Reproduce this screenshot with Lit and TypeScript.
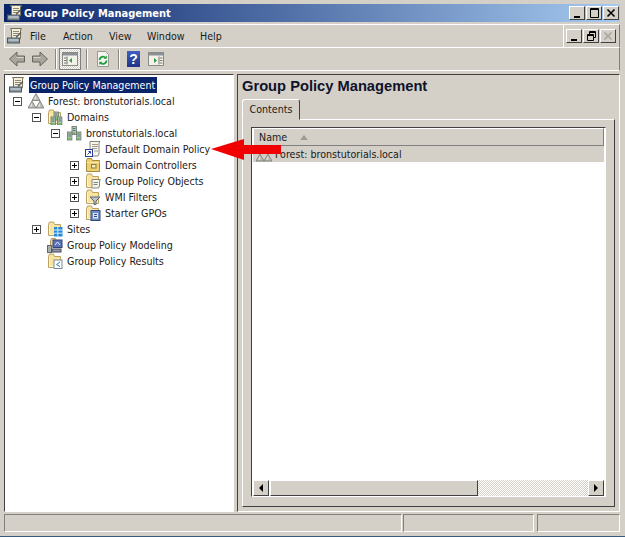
import { LitElement, html, css, svg } from "lit";
import { customElement } from "lit/decorators.js";

const i16 = (c: unknown, w = 16, h = 16) =>
  html`<svg class="ic" width=${w} height=${h} viewBox="0 0 16 16">${c}</svg>`;

const scroll = svg`<path d="M4 .5h10.5l-1 1.5v8l-1 2H3.5l1-2V2l-1-1.5z" fill="#f4efd8" stroke="#77705a"/>
<path d="M6 3.5h6M6 5.5h6M6 7.5h5" stroke="#8f8a78"/>`;
const rootIcon = i16(svg`${scroll}<rect x=".5" y="10" width="12" height="5" fill="#8b97a0" stroke="#4c5660"/>
<path d="M1.5 12h10" stroke="#d8e0e4"/><path d="M9 9.5l5-5" stroke="#555" stroke-width="1.2"/>`);
const tri = (x: number, y: number) => svg`<path d="M${x} ${y}l4 7h-8z" fill="#bdbdb8" stroke="#77776f" stroke-width=".8"/><path d="M${x} ${y + 2}l-2 3.6h2z" fill="#e8e8e2"/>`;
const forest = i16(svg`${tri(8, .5)}${tri(4, 8)}${tri(12, 8)}`);
const tower = (x: number, y: number) => svg`<rect x=${x} y=${y} width="4.4" height="8" fill="#b4c1b4" stroke="#66746e" stroke-width=".8"/>
<path d="M${x + 1} ${y + 2}h2.4M${x + 1} ${y + 4}h2.4" stroke="#4d7d6a"/><rect x=${x + 1} y=${y + 6} width="2.4" height="1.4" fill="#5ec23c"/>`;
const servers = svg`${tower(6, 1.5)}${tower(1.5, 7)}${tower(10.5, 7)}`;
const folder = svg`<path d="M1.5 3.5l1-2.5h4l1 2.5h6v11h-12z" fill="#f9e3a0" stroke="#b9a263"/>
<path d="M2.5 4.5v9h10" fill="none" stroke="#fff6d2"/>`;
const domains = i16(svg`${folder}${tower(7, 3)}${tower(4, 8)}${tower(10.5, 8)}`);
const domain = i16(servers);
const policy = i16(svg`<path d="M5 .5h10l-1 1.5v11l-1 2H4.5l.5-2z" fill="#f6f5ee" stroke="#8a8676"/>
<path d="M7 3.5h6M7 5.5h6M7 7.5h5M9 10h4" stroke="#a09c8c"/>
<rect x=".5" y="8.5" width="7" height="7" fill="#fff" stroke="#2b3f9a"/><path d="M2.5 13.5l3-3m-2 0h2v2" fill="none" stroke="#2b3f9a"/>`);
const ou = i16(svg`<path d="M1.5 3.5l1-2h4l1 2h7v11h-13z" fill="#eccf70" stroke="#a38a3a"/>
<path d="M1.5 5.5h13" stroke="#f8e6a2"/><rect x="6" y="7" width="5.5" height="4.5" fill="#8f7a3a"/><rect x="7" y="8" width="3.5" height="2.5" fill="#f5e9b8"/>`);
const gpo = i16(svg`${folder}<path d="M7 6.5h8.5l-1 1.5v5l-1 2H6.5l.5-2z" fill="#f3f3ec" stroke="#8a8676"/><path d="M8.5 9.5h4.5M8.5 11.5h4" stroke="#8a8676"/>`);
const wmi = i16(svg`${folder}<path d="M5 8h10l-4 4v3.5H9V12z" fill="#b9c4cc" stroke="#5d6870"/>`);
const starter = i16(svg`${folder}<rect x="6" y="5.5" width="9" height="10" fill="#6f8cc4" stroke="#33487e"/><rect x="8" y="8" width="5" height="5.5" fill="#dfe6f2"/><path d="M9 9.5h3M9 11.5h3" stroke="#33487e"/>`);
const sites = i16(svg`${folder}<rect x="7" y="6" width="8.5" height="9.5" fill="#2488d8"/><path d="M7 9h8.5M7 12.2h8.5M10.8 6v9.5" stroke="#d9eefc"/>`);
const modeling = i16(svg`<path d="M3.5 4l1-2.5h4l1 2.5h4v5h-10z" fill="#f7dc8e" stroke="#b49a58"/>
<rect x="6" y="3" width="9" height="7.5" fill="#5a74c0" stroke="#36406e"/><path d="M8 8l2.5-3 2.5 3" fill="none" stroke="#e6e8f4"/>
<rect x=".5" y="8.5" width="4" height="7" fill="#a8b0a8" stroke="#666"/><rect x="5" y="12" width="9" height="3" fill="#8f94a8" stroke="#444a60"/>`);
const results = i16(svg`${folder}<rect x="7" y="7" width="8" height="8.5" fill="#fff" stroke="#7a8a9a"/><path d="M13 9l-3.4 2.5 3.4 2" fill="none" stroke="#2a7aa0"/>`);

const arrowL = i16(svg`<path d="M.5 8L8 1v4h7.5v6H8v4z" fill="#a8a59c" stroke="#666459"/><path d="M7.5 6.5h7" stroke="#d6d4cc"/>`);
const arrowR = i16(svg`<path d="M15.5 8L8 1v4H.5v6H8v4z" fill="#a8a59c" stroke="#666459"/><path d="M1.5 6.5h7" stroke="#d6d4cc"/>`);
const pane = (flip: boolean) => i16(svg`<rect x="0.5" y="1.5" width="15" height="13" fill="#f2f1ea" stroke="#8c8c84"/><rect x="1" y="2" width="14" height="2.5" fill="#8a9098"/>
<path d="M${flip ? 11 : 5} 5.5v8M${flip ? 12 : 2} 7h2.5M${flip ? 12 : 2} 9.5h2.5M${flip ? 12 : 2} 12h2.5" stroke="#77776f"/>
<path d="${flip ? "M6 7l3 2.5L6 12z" : "M10 7l-3 2.5 3 2.5z"}" fill="#2f9a42"/>`);
const refresh = i16(svg`<path d="M2.5 .5h8l3 3v12h-11z" fill="#f4f4f0" stroke="#9a9a94"/>
<path d="M4.6 9a3.4 3.4 0 0 1 6-2.2M11.4 9.5a3.4 3.4 0 0 1-6 2.2" fill="none" stroke="#23a03c" stroke-width="1.8"/><path d="M11.8 4.6v3.2H8.6zM4.2 14v-3.2h3.2z" fill="#23a03c"/>`);
const help = html`<span class="helpbtn">?</span>`;

const tree: [number, boolean | null, unknown, string][] = [
  [1, false, forest, "Forest: bronstutorials.local"],
  [2, false, domains, "Domains"],
  [3, false, domain, "bronstutorials.local"],
  [4, null, policy, "Default Domain Policy"],
  [4, true, ou, "Domain Controllers"],
  [4, true, gpo, "Group Policy Objects"],
  [4, true, wmi, "WMI Filters"],
  [4, true, starter, "Starter GPOs"],
  [2, true, sites, "Sites"],
  [2, null, modeling, "Group Policy Modeling"],
  [2, null, results, "Group Policy Results"],
];

@customElement("app-root")
export class AppRoot extends LitElement {
  static styles = css`
    :host {
      display: flex;
      flex-direction: column;
      position: relative;
      width: 625px;
      height: 537px;
      box-sizing: border-box;
      padding: 4px 5px 0 4px;
      background: #d4d0c8;
      border-bottom: 1px solid #3a5a7c;
      font: 10.6px "DejaVu Sans Condensed", "DejaVu Sans", sans-serif;
      font-stretch: condensed;
      color: #1a1a1a;
      overflow: hidden;
    }
    .ic { display: block; flex: none; }
    .title {
      height: 18px;
      flex: none;
      display: flex;
      align-items: center;
      padding-left: 3px;
      margin-bottom: 2px;
      background: linear-gradient(90deg, #0a246a, #a6caf0);
      color: #fff;
      font-weight: bold;
      font-size: 11px;
      gap: 1px;
    }
    .winbtns { margin-left: auto; display: flex; gap: 1px; margin-right: 1px; }
    .wb {
      width: 16px;
      height: 14px;
      box-sizing: border-box;
      background: #d4d0c8;
      border: 1px solid;
      border-color: #fff #404040 #404040 #fff;
      display: grid;
      place-items: center;
    }
    .menubar {
      height: 24px;
      flex: none;
      display: flex;
      box-sizing: border-box;
      border: 1px solid;
      border-color: #fff #808080 #fff #fff;
    }
    .menus { display: flex; align-items: center; flex: 1; padding-left: 2px; border-right: 1px solid #fff; }
    .menus span { display: block; flex: none; }
    .menus .m-file { margin-left: 7px; width: 33px; }
    .menus .m-action { width: 46px; }
    .menus .m-view { width: 38px; }
    .menus .m-window { width: 53px; }
    .mdibtns { display: flex; align-items: center; gap: 1px; padding: 0 3px 0 2px; }
    .toolbar {
      height: 23px;
      flex: none;
      display: flex;
      align-items: center;
      padding-left: 5px;
      box-sizing: border-box;
      border-right: 1px solid #808080;
      border-bottom: 1px solid #fff;
    }
    .toolbar .sep { width: 2px; height: 20px; background: #8a8880; border-right: 1px solid #fff; box-sizing: border-box; flex: none; }
    .sp2 { width: 2px; flex: none; }
    .sp5 { width: 5px; flex: none; }
    .sp7 { width: 7px; flex: none; }
    .sp8 { width: 8px; flex: none; }
    .tb-active {
      width: 22px;
      height: 22px;
      flex: none;
      box-sizing: border-box;
      display: grid;
      place-items: center;
      border: 1px solid #808080;
      background: conic-gradient(#d4d0c8 25%, #fff 0 50%, #d4d0c8 0 75%, #fff 0) 0 0 / 2px 2px;
    }
    .helpbtn {
      width: 13px;
      height: 16px;
      flex: none;
      background: linear-gradient(#3f5fc0, #1f3488);
      color: #fff;
      font: bold 14px/16px "Liberation Sans", sans-serif;
      text-align: center;
    }
    .main { height: 438px; margin-top: 3px; flex: none; display: flex; gap: 3px; }
    .left, .right {
      box-sizing: border-box;
      border: 1px solid;
      border-color: #404040 #fff #fff #404040;
    }
    .left { width: 230px; background: #fff; padding-top: 2px; }
    .row { height: 16px; display: flex; align-items: center; white-space: nowrap; }
    .row.top { padding-left: 4px; }
    .slot { width: 19px; flex: none; display: flex; align-items: center; padding-left: 4px; box-sizing: border-box; }
    .box {
      width: 9px;
      height: 9px;
      box-sizing: border-box;
      border: 1px solid #555;
      position: relative;
      background: #fff;
    }
    .box::before { content: ""; position: absolute; left: 1px; right: 1px; top: 3px; height: 1px; background: #000; }
    .box.plus::after { content: ""; position: absolute; top: 1px; bottom: 1px; left: 3px; width: 1px; background: #000; }
    .lbl { margin-left: 4px; line-height: 16px; }
    .lbl.sel { margin-left: 4px; background: #0a246a; color: #fff; padding: 0 2px 0 1px; }
    .right { flex: 1; padding: 3px 4px 4px 4px; display: flex; flex-direction: column; }
    h1 { margin: 0; height: 17px; font: bold 14.7px/17px "Liberation Sans", sans-serif; color: #10122a; }
    .tab {
      margin-top: 4px;
      width: 58px;
      height: 21px;
      box-sizing: border-box;
      border: 1px solid;
      border-color: #fff #404040 transparent #fff;
      border-radius: 3px 3px 0 0;
      text-align: center;
      line-height: 19px;
      position: relative;
      z-index: 1;
      margin-bottom: -1px;
      background: #d4d0c8;
    }
    .page {
      flex: 1;
      box-sizing: border-box;
      border: 1px solid;
      border-color: #fff #404040 #404040 #fff;
      padding: 7px 8px 9px 8px;
      display: flex;
    }
    .list {
      flex: 1;
      box-sizing: border-box;
      border: 1px solid;
      border-color: #404040 #fff #fff #404040;
      background: #fff;
      display: flex;
      flex-direction: column;
      padding: 0 1px 0 1px;
    }
    .head {
      height: 18px;
      flex: none;
      box-sizing: border-box;
      background: #d4d0c8;
      border: 1px solid;
      border-color: #fff #808080 #808080 #fff;
      display: flex;
      align-items: center;
      padding-left: 5px;
    }
    .sort { width: 0; height: 0; margin-left: 13px; border: 4px solid transparent; border-top: 0; border-bottom: 5px solid #a09c90; }
    .lrow { height: 16px; flex: none; display: flex; align-items: center; background: #d4d0c8; padding-left: 3px; gap: 3px; }
    .lspace { flex: 1; }
    .hscroll { height: 16px; flex: none; display: flex; }
    .sb {
      width: 16px;
      flex: none;
      box-sizing: border-box;
      background: #d4d0c8;
      border: 1px solid;
      border-color: #fff #404040 #404040 #fff;
      display: grid;
      place-items: center;
    }
    .thumb {
      width: 208px;
      flex: none;
      margin-left: 1px;
      box-sizing: border-box;
      background: #d4d0c8;
      border: 1px solid;
      border-color: #fff #404040 #404040 #fff;
    }
    .track { flex: 1; background: conic-gradient(#d4d0c8 25%, #fff 0 50%, #d4d0c8 0 75%, #fff 0) 0 0 / 2px 2px; }
    .tri-l, .tri-r { width: 0; height: 0; border: 4px solid transparent; }
    .tri-l { border-left: 0; border-right: 4px solid #000; }
    .tri-r { border-right: 0; border-left: 4px solid #000; }
    .status { height: 18px; margin-top: 2px; flex: none; display: flex; gap: 1px; }
    .status div { box-sizing: border-box; border: 1px solid; border-color: #808080 #fff #fff #808080; }
    .status .s1 { width: 398px; }
    .status .s2 { width: 131px; margin-right: 2px; }
    .status .s3 { width: 83px; }
    .arrow { position: absolute; left: 211px; top: 139px; }
  `;

  private mdi(kind: string) {
    const ink = kind === "xoff" ? "#a8a59c" : "#000";
    const body =
      kind === "min"
        ? svg`<path d="M2 8h6v2H2z" fill=${ink}/>`
        : kind === "max"
          ? svg`<path d="M1.5 .5h8v9h-8zM1.5 1.5h8" fill="none" stroke=${ink}/>`
          : kind === "restore"
            ? svg`<path d="M3.5 3V.5h6v6H8M1.5 3.5h6v6h-6zM1.5 4.5h6M3.5 1.5h6" fill="none" stroke=${ink}/>`
            : svg`<path d="M1.5 1.5l7 7m0-7l-7 7" stroke=${ink} stroke-width="1.6"/>`;
    return html`<div class="wb"><svg width="11" height="10" viewBox="0 0 11 10">${body}</svg></div>`;
  }

  render() {
    return html`
      <div class="title">${rootIcon}<span>Group Policy Management</span>
        <div class="winbtns">${this.mdi("min")}${this.mdi("max")}${this.mdi("x")}</div>
      </div>
      <div class="menubar">
        <div class="menus">${rootIcon}
          <span class="m-file">File</span><span class="m-action">Action</span><span class="m-view">View</span><span class="m-window">Window</span><span>Help</span>
        </div>
        <div class="mdibtns">${this.mdi("min")}${this.mdi("restore")}${this.mdi("xoff")}</div>
      </div>
      <div class="toolbar">
        ${arrowL}<div class="sp7"></div>${arrowR}<div class="sp7"></div><div class="sep"></div><div class="sp2"></div>
        <div class="tb-active">${pane(false)}</div><div class="sp5"></div><div class="sep"></div><div class="sp7"></div>
        ${refresh}<div class="sp7"></div><div class="sep"></div><div class="sp7"></div>
        ${help}<div class="sp8"></div>${pane(true)}
      </div>
      <div class="main">
        <div class="left">
          <div class="row top">${rootIcon}<span class="lbl sel">Group Policy Management</span></div>
          ${tree.map(
            ([lvl, st, ic, txt]) => html`<div class="row" style="padding-left:${4 + (lvl - 1) * 19}px">
              <div class="slot">${st === null ? "" : html`<div class="box ${st ? "plus" : ""}"></div>`}</div>
              ${ic}<span class="lbl">${txt}</span>
            </div>`,
          )}
        </div>
        <div class="right">
          <h1>Group Policy Management</h1>
          <div class="tab">Contents</div>
          <div class="page">
            <div class="list">
              <div class="head"><span>Name</span><span class="sort"></span></div>
              <div class="lrow">${forest}<span>Forest: bronstutorials.local</span></div>
              <div class="lspace"></div>
              <div class="hscroll">
                <div class="sb"><div class="tri-l"></div></div>
                <div class="thumb"></div>
                <div class="track"></div>
                <div class="sb"><div class="tri-r"></div></div>
              </div>
            </div>
          </div>
        </div>
      </div>
      <div class="status"><div class="s1"></div><div class="s2"></div><div class="s3"></div></div>
      <svg class="arrow" width="71" height="21" viewBox="0 0 71 21"><path d="M0 10L33 0v6h37v9H33v6z" fill="#f00000"/></svg>
    `;
  }
}
